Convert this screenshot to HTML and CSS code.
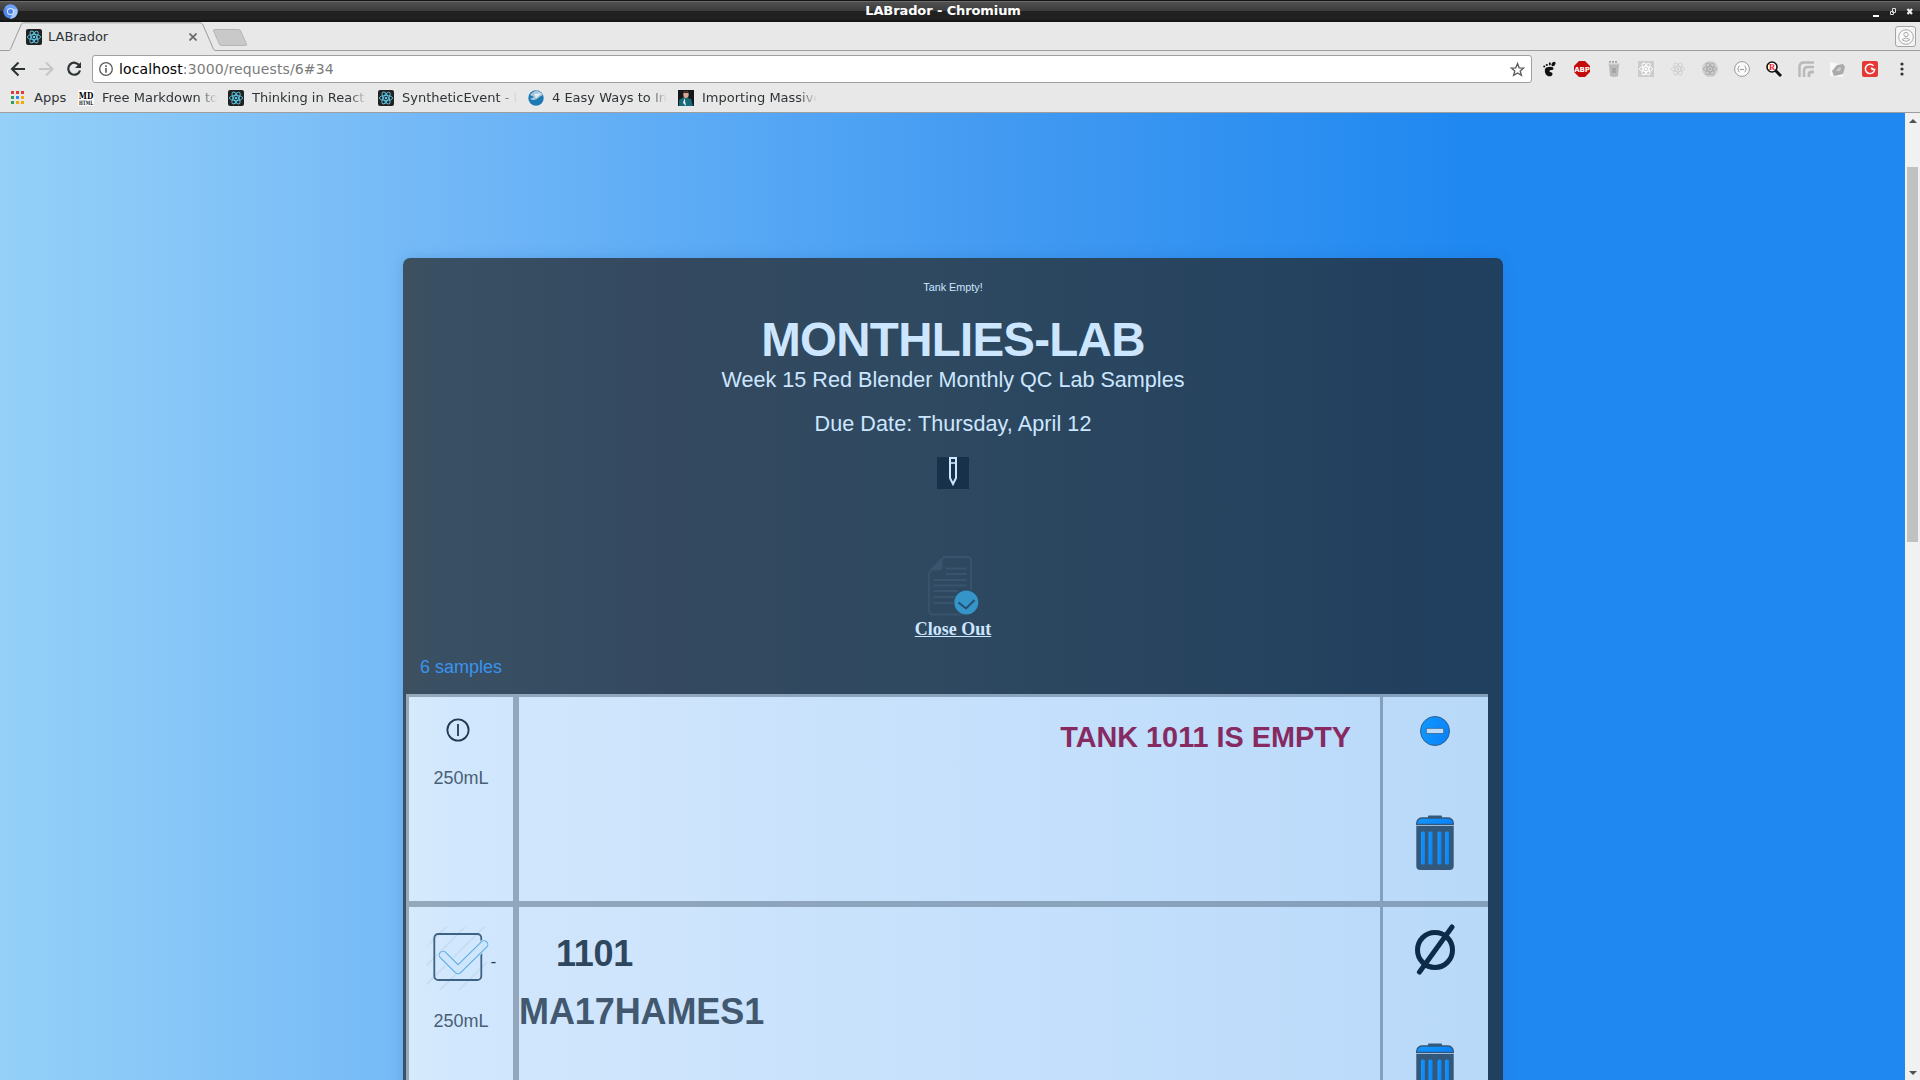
FILE: index.html
```html
<!DOCTYPE html>
<html lang="en">
<head>
<meta charset="utf-8">
<title>LABrador</title>
<link rel="stylesheet" href="styles.css">
</head>
<body>
<svg class="defs" width="0" height="0">
  <defs>
    <linearGradient id="blue" x1="0" y1="0" x2="1" y2="0.3"><stop offset="0" stop-color="#1299fb"/><stop offset="1" stop-color="#0a84fb"/></linearGradient>
    <pattern id="hatch" width="19" height="19" patternUnits="userSpaceOnUse"><path d="M-2 21L21 -2M-11.500 11.500L11.500 -11.500M7.500 30.500L30.500 7.500" stroke="#c3d9ee" stroke-width="2" opacity=".7"/></pattern>
    <symbol id="atom" viewBox="0 0 16 16"><g fill="none" stroke="currentColor" stroke-width=".9"><ellipse cx="8" cy="8" rx="6.600" ry="2.600"/><ellipse cx="8" cy="8" rx="6.600" ry="2.600" transform="rotate(60 8 8)"/><ellipse cx="8" cy="8" rx="6.600" ry="2.600" transform="rotate(120 8 8)"/></g><circle cx="8" cy="8" r="1.300" fill="currentColor"/></symbol>
    <symbol id="trash" viewBox="0 0 38 56">
      <path d="M12 3V1.500Q12 .5 13 .5H25Q26 .5 26 1.500V3" fill="#34587a"/>
      <path d="M.7 9.500V8Q1.500 3 6.500 3H31.500Q36.500 3 37.300 8V9.500Z" fill="url(#blue)" stroke="#34587a" stroke-width="1.300"/>
      <path d="M.3 11H37.700V51Q37.700 55 33.700 55H4.300Q.3 55 .3 51Z" fill="#34587a"/>
      <g fill="url(#blue)"><rect x="5" y="16.500" width="4" height="33" rx="1.500"/><rect x="12.500" y="16.500" width="4" height="33" rx="1.500"/><rect x="21.500" y="16.500" width="4" height="33" rx="1.500"/><rect x="29" y="16.500" width="4" height="33" rx="1.500"/></g>
    </symbol>
  </defs>
</svg>

<header class="titlebar">
  <svg class="app-icon" width="15" height="15" viewBox="0 0 15 15"><circle cx="7.500" cy="7.500" r="7.200" fill="#4f86e8"/><path d="M7.500 4.500H14A7.200 7.200 0 0 1 7 14.700L10 9Z" fill="#a5c5fb"/><path d="M2 3A7.200 7.200 0 0 1 14 4.500H7.500L5 9Z" fill="#6f9ff2"/><circle cx="7.500" cy="7.500" r="3.500" fill="#dfeaff"/><circle cx="7.500" cy="7.500" r="2.500" fill="#4a83ea"/></svg>
  <span class="window-title">LABrador - Chromium</span>
  <svg class="window-buttons" width="44" height="10" viewBox="0 0 44 10"><path d="M0 8h6v2H0z" fill="#fff"/><path d="M19.500 1.500h3v4h-3zM17.500 4.500h3v3h-3z" fill="none" stroke="#ddd"/><path d="M34.500 2L39 7M39 2L34.500 7" stroke="#eee" stroke-width="2.200"/></svg>
</header>

<div class="tabstrip">
  <svg class="tab-shape" width="1920" height="29" viewBox="0 0 1920 29"><path d="M0 28.500H9C10.500 28.500 10.500 27 11 26L21 3C21.700 1.300 22 .8 23.500 .8H200C202 .8 202 1.500 203 3L213 26C214 28 214 28.500 216 28.500H1920" fill="none" stroke="#9c9c9c"/><path d="M215 7.500H238.500Q240 7.500 240.700 9L246.500 22Q247 23.500 245.500 23.500H221.500Q220 23.500 219.300 22L213.600 9Q213 7.500 215 7.500Z" fill="#c9c9c9" stroke="#b5b5b5"/></svg>
  <div class="tab">
    <svg class="react-icon" width="16" height="16"><use href="#atom"/></svg>
    <span>LABrador</span>
    <svg class="tab-close" width="8" height="8" viewBox="0 0 8 8"><path d="M.5 .5L7.500 7.500M7.500 .5L.5 7.500" stroke="#666" stroke-width="1.600"/></svg>
  </div>
  <div class="profile"><svg width="16" height="16" viewBox="0 0 16 16" fill="none" stroke="#aaa"><circle cx="8" cy="8" r="7.300" fill="#fafafa"/><circle cx="8" cy="5.500" r="2.200"/><path d="M4 10.500Q8 7.500 12 10.500Q8 14 4 10.500Z"/></svg></div>
</div>

<nav class="toolbar">
  <svg class="nav-icons" width="82" height="28" viewBox="0 0 82 28" fill="none" stroke-width="2.100"><path d="M25 14H12.500M18.500 7.500L12 14L18.500 20.500" stroke="#2e3436"/><path d="M39 14H52M46 7.500L52.500 14L46 20.500" stroke="#c6c6c6"/><path d="M79.500 10.800A6 6 0 1 0 80 15.500" stroke="#2e3436" stroke-width="2.200"/><path d="M81 7V13H75Z" fill="#2e3436"/></svg>
  <div class="omnibox">
    <svg width="14" height="14" viewBox="0 0 14 14"><circle cx="7" cy="7" r="6.300" fill="none" stroke="#5a5a5a" stroke-width="1.300"/><path d="M6.200 3.200h1.600v1.700H6.200zM6.200 6h1.600v4.700H6.200z" fill="#5a5a5a"/></svg>
    <span class="url">localhost<span class="url-rest">:3000/requests/6#34</span></span>
    <svg class="star" width="15" height="15" viewBox="0 0 15 15"><path d="M7.500 1.500L9.200 5.800L13.700 6.100L10.200 9L11.400 13.400L7.500 10.900L3.600 13.400L4.800 9L1.300 6.100L5.800 5.800Z" fill="none" stroke="#5a5a5a" stroke-width="1.300"/></svg>
  </div>
  <div class="extensions">
    <svg width="16" height="16" viewBox="0 0 16 16"><path d="M3 8C4 5.500 12 4.500 11.500 8C11 9.500 7.500 8.500 7.500 10.200C7.500 11.500 10.500 10.500 10.500 13C10.500 15.500 7 16 5 14.500C3 13 2.500 10 3 8Z" fill="#111"/><ellipse cx="11.500" cy="3" rx="1.700" ry="2.500" fill="#111" transform="rotate(35 11.500 3)"/><ellipse cx="7.800" cy="2.800" rx="1" ry="1.600" fill="#111"/><circle cx="4.800" cy="4" r="1.100" fill="#111"/><circle cx="2.200" cy="5.600" r="1" fill="#111"/></svg>
    <svg width="16" height="16" viewBox="0 0 16 16"><path d="M5 0H11L16 5V11L11 16H5L0 11V5Z" fill="#c40a0a"/><text x="8" y="11" class="abp">ABP</text></svg>
    <svg width="16" height="16" viewBox="0 0 16 16"><path d="M3 4H13L12 15Q8 17 4 15Z" fill="#b9b9b9"/><path d="M2.500 2.500H13.500V4H2.500z" fill="#c9c9c9"/><path d="M3 .8H12" stroke="#888" stroke-width="1.300" stroke-dasharray="2 1"/><path d="M6 7H10V12H6z" fill="#a5a5a5"/></svg>
    <svg class="atom-box" width="16" height="16"><use href="#atom"/></svg>
    <svg class="atom-pale" width="16" height="16"><use href="#atom"/></svg>
    <svg class="atom-round" width="16" height="16"><use href="#atom"/></svg>
    <svg width="16" height="16" viewBox="0 0 16 16"><circle cx="8" cy="8" r="7.400" fill="#fafafa" stroke="#999"/><path d="M5.500 5Q4.500 5 4.500 6.500Q4.500 8 3.500 8Q4.500 8 4.500 9.500Q4.500 11 5.500 11M10.500 5Q11.500 5 11.500 6.500Q11.500 8 12.500 8Q11.500 8 11.500 9.500Q11.500 11 10.500 11M6 8.500H10" fill="none" stroke="#999"/></svg>
    <svg width="16" height="16" viewBox="0 0 16 16"><circle cx="6" cy="6" r="5" fill="#fff" stroke="#111" stroke-width="1.600"/><path d="M9.500 9.500L15 15" stroke="#111" stroke-width="3"/><text x="6" y="9" class="lens">R</text></svg>
    <svg width="16" height="16" viewBox="0 0 16 16" fill="none" stroke="#b9b9b9" stroke-width="2.500"><path d="M1.500 16V6Q1.500 1.500 6 1.500H16M6 16V10Q6 6 10 6H16" /><path d="M11 16V13.500Q11 11 13.500 11H16" stroke-width="3"/></svg>
    <svg width="16" height="16" viewBox="0 0 16 16"><path d="M0 1L14 4L13 16L0 15Z" fill="#f7f7f7"/><path d="M2 10L7 4L13 3L15 6L13 13L4 15Z" fill="#aaa"/><path d="M6 10L9 6.500L11.500 6.500L10 10Z" fill="#cdcdcd"/></svg>
    <svg width="16" height="16" viewBox="0 0 16 16"><rect width="16" height="16" rx="2" fill="#e53935"/><path d="M11.500 4.700A4.700 4.700 0 1 0 12.700 8.500H9.500M9 7L12 8.500" fill="none" stroke="#fff" stroke-width="1.500"/></svg>
    <svg class="menu" width="4" height="14" viewBox="0 0 4 14" fill="#333"><circle cx="2" cy="2" r="1.600"/><circle cx="2" cy="7" r="1.600"/><circle cx="2" cy="12" r="1.600"/></svg>
  </div>
</nav>

<div class="bookmarks">
  <a class="bookmark apps"><svg width="13" height="13" viewBox="0 0 13 13"><path fill="#e53935" d="M0 0h3v3H0zM5 0h3v3H5zM10 0h3v3h-3z"/><path fill="#2e9e58" d="M0 5h3v3H0zM0 10h3v3H0z"/><path fill="#2d8cf0" d="M5 5h3v3H5z"/><path fill="#f4a80c" d="M10 5h3v3h-3zM5 10h3v3H5zM10 10h3v3h-3z"/></svg><span>Apps</span></a>
  <a class="bookmark"><svg width="16" height="16" viewBox="0 0 16 16"><rect width="16" height="16" fill="#fff"/><text x="8" y="8.500" class="md" textLength="14.500" lengthAdjust="spacingAndGlyphs">MD</text><text x="8" y="14.500" class="md-small" textLength="14" lengthAdjust="spacingAndGlyphs">HTML</text></svg><span>Free Markdown to</span></a>
  <a class="bookmark"><svg class="react-icon" width="16" height="16"><use href="#atom"/></svg><span>Thinking in React</span></a>
  <a class="bookmark"><svg class="react-icon" width="16" height="16"><use href="#atom"/></svg><span>SyntheticEvent - R</span></a>
  <a class="bookmark"><svg width="16" height="16" viewBox="0 0 16 16"><circle cx="8" cy="8" r="7.700" fill="#1b79b4"/><path d="M2 5Q5 1 9 .5Q13 1.500 15 5Q12 6 9 9Q5 11 2 9L6 7Z" fill="#a9c6da"/><path d="M6 4L14 3L8 8Z" fill="#e2ebf0"/></svg><span>4 Easy Ways to In</span></a>
  <a class="bookmark"><svg width="16" height="16" viewBox="0 0 16 16"><rect width="16" height="16" fill="#15181b"/><path d="M1 16V10L6 7L13 9L15 16Z" fill="#176a77"/><ellipse cx="8" cy="4.500" rx="2.700" ry="3.600" fill="#d8a793"/><path d="M5 3Q8 -1 11 3Z" fill="#3a2620"/><path d="M6.500 8L8 16L5 13Z" fill="#eee"/></svg><span>Importing Massive</span></a>
</div>

<div class="viewport">
  <main class="page">
    <section class="request">
      <p class="notice">Tank Empty!</p>
      <h1>MONTHLIES-LAB</h1>
      <p class="lead">Week 15 Red Blender Monthly QC Lab Samples</p>
      <p class="lead due">Due Date: Thursday, April 12</p>
      <div class="edit"><svg width="32" height="32" viewBox="0 0 32 32" fill="none" stroke="#cde6ff" stroke-width="2"><path d="M13 1H19V21L16 27L13 21Z"/><path d="M13 6H19" stroke-width="1.600"/></svg></div>
      <svg class="doc" width="52" height="60" viewBox="0 0 52 60"><path d="M1 17V55Q1 58.500 4.500 58.500H39.500Q43 58.500 43 55V4.500Q43 1 39.500 1H16Z" fill="none" stroke="#39546c" stroke-width="1.800"/><path d="M1 14.500L14.500 1V11Q14.500 14.500 11 14.500Z" fill="#39546c"/><path d="M18 12.500H38.500M18 18H38.500M5.500 24H38.500M5.500 29.500H38.500M5.500 35H30M5.500 41H27M5.500 47H27" stroke="#39546c" stroke-width="1.800"/><circle cx="38.300" cy="46.500" r="13" fill="#2b4861"/><circle cx="38.300" cy="46.500" r="12" fill="#3594c8"/><path d="M30.500 46.500L38 52.500L46.500 44" fill="none" stroke="#254e70" stroke-width="2"/></svg>
      <a class="close-out">Close Out</a>
      <p class="count">6 samples</p>
      <div class="samples">
        <div class="cell amount">
          <svg class="info" width="24" height="24" viewBox="0 0 24 24" fill="none" stroke="#203a52" stroke-width="1.800"><circle cx="12" cy="12" r="10.600"/><path d="M12 6V18"/></svg>
          <span>250mL</span>
        </div>
        <div class="cell detail"><p class="empty">TANK 1011 IS EMPTY</p></div>
        <div class="cell actions">
          <svg class="remove" width="30" height="30" viewBox="0 0 30 30"><circle cx="15" cy="15" r="14.500" fill="url(#blue)" stroke="#2c618f"/><rect x="6.300" y="12.300" width="17.400" height="5.200" fill="#bddbfa" stroke="#3c6f9c" stroke-width=".9"/></svg>
          <svg width="38" height="56"><use href="#trash"/></svg>
        </div>
        <div class="cell amount checked">
          <div class="check"><svg width="63" height="63" viewBox="0 0 63 63"><path d="M12 0H60V45L48 63H0V20Z" fill="url(#hatch)"/><rect x="7.300" y="7" width="47" height="46" rx="4" fill="none" stroke="#3e6284" stroke-width="1.800"/><path d="M16 28L31 43L57 17.500" fill="none" stroke="#d3e8fd" stroke-width="10" stroke-linecap="round" stroke-linejoin="round"/><path d="M16 28L31 43L57 17.500" fill="none" stroke="#56abe4" stroke-width="8.600" stroke-linecap="round" stroke-linejoin="round"/><path d="M16 28L31 43L57 17.500" fill="none" stroke="#cee5fb" stroke-width="6.600" stroke-linecap="round" stroke-linejoin="round"/></svg><span class="dash">-</span></div>
          <span>250mL</span>
        </div>
        <div class="cell detail"><p class="tank">1101</p><p class="lot">MA17HAMES1</p></div>
        <div class="cell actions second">
          <svg width="42" height="52" viewBox="0 0 42 52" fill="none" stroke="#0b2b49" stroke-width="5"><circle cx="21" cy="26" r="17.500"/><path d="M5.500 48L38 3" stroke-linecap="round"/></svg>
          <svg width="38" height="56"><use href="#trash"/></svg>
        </div>
      </div>
    </section>
  </main>
  <div class="scrollbar"><i class="up"></i><b class="thumb"></b><i class="down"></i></div>
</div>
</body>
</html>
```
FILE: styles.css
```css
* { box-sizing: border-box; }
body { margin: 0; width: 1920px; height: 1080px; overflow: hidden; display: flex; flex-direction: column; background: #e8e8e8; font-family: "DejaVu Sans", sans-serif; font-size: 13px; color: #2e3436; }
p, h1 { margin: 0; }
svg { display: block; flex: none; }
.defs { position: absolute; }

.titlebar { flex: none; height: 22px; display: flex; align-items: center; justify-content: space-between; padding: 0 3px 0 3px; background: linear-gradient(#151515 0 1px, #6a6a6a 1px 2px, #505050 2px, #3c3c3c 11px, #212121 11px 20px, #151515 20px); color: #fff; }
.window-title { font-weight: bold; font-size: 13px; line-height: 20px; letter-spacing: -.1px; margin-right: 5px; }
.window-buttons { margin: 1px 0 0; }

.tabstrip { flex: none; height: 29px; position: relative; display: flex; justify-content: space-between; }
.tab-shape { position: absolute; left: 0; top: 0; }
.tab { display: flex; align-items: center; width: 197px; padding: 0 0 0 26px; gap: 6px; }
.tab-close { margin-left: auto; }
.react-icon { background: #222; border-radius: 2px; color: #5ec9e8; }
.profile { width: 21px; height: 21px; margin: 4px 4px 0 0; border: 1px solid #a5a5a5; border-radius: 3px; background: #f4f4f4; display: grid; place-items: center; }

.toolbar { flex: none; height: 36px; padding: 4px 17px 4px 0; display: flex; }
.nav-icons { width: 82px; margin-right: 10px; }
.omnibox { width: 1440px; height: 28px; border: 1px solid #a0a0a0; border-radius: 3px; background: #fff; display: flex; align-items: center; padding: 0 6px 0 6px; gap: 6px; color: #000; font-size: 14px; letter-spacing: .11px; }
.url-rest { color: #7b7b7b; }
.star { margin-left: auto; }
.extensions { flex: 1; display: flex; align-items: center; gap: 16px; padding-left: 10px; }
.abp { font: bold 7px "DejaVu Sans", sans-serif; fill: #fff; text-anchor: middle; letter-spacing: -.2px; }
.lens { font: bold 8.5px "Liberation Serif", serif; fill: #e22; text-anchor: middle; }
.atom-box { background: #ccc; color: #fff; }
.atom-pale { color: #cfcfcf; }
.atom-round { background: #d0d0d0; border-radius: 50%; color: #aaa; }
.menu { margin-left: 6px; }
.nav-icons, .omnibox { flex: none; }

.bookmarks { flex: none; height: 26px; padding: 0 0 4px 11px; display: flex; align-items: center; border-bottom: 1px solid #9e9e9e; }
.bookmark { width: 150px; display: flex; align-items: center; gap: 8px; padding-right: 11px; white-space: nowrap; }
.bookmark.apps { width: 67px; gap: 10px; padding: 0; }
.bookmark span { flex: 1; overflow: hidden; }
.bookmark:not(.apps) span { mask-image: linear-gradient(to right, #000 84%, transparent 100%); }
.md { font: bold 9.5px "DejaVu Serif", serif; text-anchor: middle; fill: #000; }
.md-small { font: bold 6px "DejaVu Serif", serif; text-anchor: middle; fill: #000; }

.viewport { flex: 1; min-height: 0; display: flex; }
.page { flex: 1; overflow: hidden; padding: 145px 0 0 403px; background: linear-gradient(to right, #94d0f8 0, #74b9f7 420px, #4fa3f4 840px, #449bf1 980px, #1f88f1 1470px); }
.scrollbar { width: 15px; background: #f1f1f1; display: flex; flex-direction: column; align-items: center; padding: 6px 0 5px; }
.scrollbar i { border: 4px solid transparent; }
.up { border-top: 0 !important; border-bottom-color: #505050 !important; }
.down { border-bottom: 0 !important; border-top-color: #505050 !important; margin-top: auto; }
.thumb { width: 11px; height: 375px; margin-top: 44px; background: #c1c1c1; }

.request { width: 1100px; height: 1200px; border-radius: 7px 7px 0 0; padding-left: 3px; background: linear-gradient(to right, #3d505f 0, #384f64 50px, #34495f 270px, #2e4960 520px, #213f5e 1050px); box-shadow: 0 0 12px rgba(30, 100, 180, .25); font-family: "Liberation Sans", Arial, sans-serif; font-size: 18px; color: #cde6ff; display: flex; flex-direction: column; align-items: center; }
.request > * { flex: none; margin-left: -3px; }
.notice { font-size: 10.8px; line-height: 12px; margin-top: 23px; }
h1 { font-size: 47.500px; line-height: 52px; margin-top: 21px; letter-spacing: -.75px; }
.lead { font-size: 21.6px; line-height: 26px; margin-top: 1px; }
.request > .due { margin-top: 18px; letter-spacing: .06px; }
.edit { background: #18314a; margin-top: 20px; }
.request > .doc { margin-top: 67px; margin-left: -1px; }
.close-out { font: bold 18px/20px "Liberation Serif", serif; text-decoration: underline; margin-top: 3px; }
.request > .count { align-self: flex-start; margin-left: 14px; color: #3a94ee; line-height: 20px; margin-top: 18px; }
.request > .samples { align-self: flex-start; margin: 17px 0 0; width: 1082px; display: grid; grid-template-columns: 110px 864px 108px; grid-template-rows: 210px 230px; background: linear-gradient(to right, #d6eafa 0, #d1e7fd 50px, #cde4fc 270px, #c3dffc 670px, #b9d9f9 1080px); }
.cell { border: 3px solid rgba(52, 73, 94, .4); border-right: 0; }
.amount { border-right: 3px solid rgba(52, 73, 94, .4); display: flex; flex-direction: column; align-items: center; color: #485f76; padding-top: 21px; line-height: 20px; }
.info { margin: 0 6px 26px 0; }
.checked { padding-top: 20px; }
.check { display: flex; align-items: center; margin-bottom: 21px; margin-left: 1px; }
.dash { font-family: "Liberation Serif", serif; font-size: 16px; color: #203a52; padding: 7px 0 0 1px; }
.empty { text-align: right; padding: 24px 29px 0 0; font-weight: bold; font-size: 28.8px; line-height: 32px; color: #862a61; }
.tank { font-weight: bold; font-size: 36px; line-height: 40px; color: #2e475f; padding: 27px 0 0 37px; letter-spacing: -.3px; }
.lot { font-weight: bold; font-size: 36px; line-height: 40px; margin-top: 18px; color: #42586f; letter-spacing: -.1px; }
.actions { display: flex; flex-direction: column; align-items: center; padding: 19px 2px 0 0; }
.remove { margin-bottom: 69px; }
.second { padding-top: 17px; gap: 67px; }
```
